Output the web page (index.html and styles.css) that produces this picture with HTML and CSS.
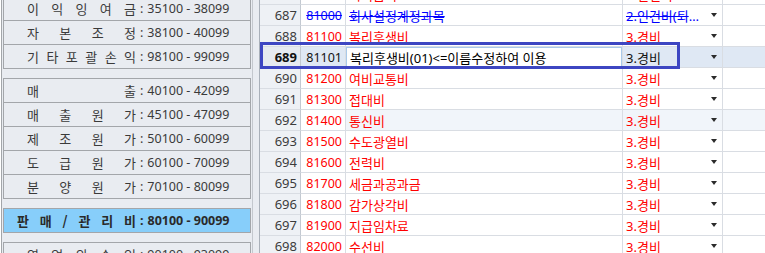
FILE: index.html
```html
<!DOCTYPE html>
<html lang="ko">
<head>
  <meta charset="UTF-8">
  <title>계정과목 범위</title>
  <link rel="stylesheet" href="styles.css">
</head>
<body>
  <div class="screen">
    <div class="range-panel">
      <div class="range-group first">
        <div class="range-btn"><span class="range-label"><span>이</span><span>익</span><span>잉</span><span>여</span><span>금</span></span><span class="range-colon">:</span><span class="range-num">35100 - 38099</span></div>
        <div class="range-btn"><span class="range-label"><span>자</span><span>본</span><span>조</span><span>정</span></span><span class="range-colon">:</span><span class="range-num">38100 - 40099</span></div>
        <div class="range-btn"><span class="range-label"><span>기</span><span>타</span><span>포</span><span>괄</span><span>손</span><span>익</span></span><span class="range-colon">:</span><span class="range-num">98100 - 99099</span></div>
      </div>
      <div class="range-group">
        <div class="range-btn"><span class="range-label"><span>매</span><span>출</span></span><span class="range-colon">:</span><span class="range-num">40100 - 42099</span></div>
        <div class="range-btn"><span class="range-label"><span>매</span><span>출</span><span>원</span><span>가</span></span><span class="range-colon">:</span><span class="range-num">45100 - 47099</span></div>
        <div class="range-btn"><span class="range-label"><span>제</span><span>조</span><span>원</span><span>가</span></span><span class="range-colon">:</span><span class="range-num">50100 - 60099</span></div>
        <div class="range-btn"><span class="range-label"><span>도</span><span>급</span><span>원</span><span>가</span></span><span class="range-colon">:</span><span class="range-num">60100 - 70099</span></div>
        <div class="range-btn"><span class="range-label"><span>분</span><span>양</span><span>원</span><span>가</span></span><span class="range-colon">:</span><span class="range-num">70100 - 80099</span></div>
      </div>
      <div class="range-group">
        <div class="range-btn active"><span class="range-label"><span>판</span><span>매</span><span>/</span><span>관</span><span>리</span><span>비</span></span><span class="range-colon">:</span><span class="range-num">80100 - 90099</span></div>
      </div>
      <div class="range-group">
        <div class="range-btn"><span class="range-label"><span>영</span><span>업</span><span>외</span><span>수</span><span>익</span></span><span class="range-colon">:</span><span class="range-num">90100 - 93099</span></div>
      </div>
    </div>

    <div class="splitter"></div>

    <div class="grid">
      <div class="grid-body">
        <div class="row">
          <div class="cell rownum">686</div>
          <div class="cell code">80900</div>
          <div class="cell name">퇴직급여</div>
          <div class="cell type"><span class="type-text">2.인건비</span><span class="drop"></span></div>
          <div class="cell extra"></div>
        </div>
        <div class="row deleted">
          <div class="cell rownum">687</div>
          <div class="cell code">81000</div>
          <div class="cell name">회사설정계정과목</div>
          <div class="cell type"><span class="type-text">2.인건비(퇴직급여)</span><span class="drop"></span></div>
          <div class="cell extra"></div>
        </div>
        <div class="row">
          <div class="cell rownum">688</div>
          <div class="cell code">81100</div>
          <div class="cell name">복리후생비</div>
          <div class="cell type"><span class="type-text">3.경비</span><span class="drop"></span></div>
          <div class="cell extra"></div>
        </div>
        <div class="row selected">
          <div class="cell rownum">689</div>
          <div class="cell code">81101</div>
          <div class="cell name"><div class="editor">복리후생비(01)&lt;=이름수정하여 이용</div></div>
          <div class="cell type"><span class="type-text">3.경비</span><span class="drop"></span></div>
          <div class="cell extra"></div>
        </div>
        <div class="row">
          <div class="cell rownum">690</div>
          <div class="cell code">81200</div>
          <div class="cell name">여비교통비</div>
          <div class="cell type"><span class="type-text">3.경비</span><span class="drop"></span></div>
          <div class="cell extra"></div>
        </div>
        <div class="row">
          <div class="cell rownum">691</div>
          <div class="cell code">81300</div>
          <div class="cell name">접대비</div>
          <div class="cell type"><span class="type-text">3.경비</span><span class="drop"></span></div>
          <div class="cell extra"></div>
        </div>
        <div class="row hover">
          <div class="cell rownum">692</div>
          <div class="cell code">81400</div>
          <div class="cell name">통신비</div>
          <div class="cell type"><span class="type-text">3.경비</span><span class="drop"></span></div>
          <div class="cell extra"></div>
        </div>
        <div class="row">
          <div class="cell rownum">693</div>
          <div class="cell code">81500</div>
          <div class="cell name">수도광열비</div>
          <div class="cell type"><span class="type-text">3.경비</span><span class="drop"></span></div>
          <div class="cell extra"></div>
        </div>
        <div class="row">
          <div class="cell rownum">694</div>
          <div class="cell code">81600</div>
          <div class="cell name">전력비</div>
          <div class="cell type"><span class="type-text">3.경비</span><span class="drop"></span></div>
          <div class="cell extra"></div>
        </div>
        <div class="row">
          <div class="cell rownum">695</div>
          <div class="cell code">81700</div>
          <div class="cell name">세금과공과금</div>
          <div class="cell type"><span class="type-text">3.경비</span><span class="drop"></span></div>
          <div class="cell extra"></div>
        </div>
        <div class="row">
          <div class="cell rownum">696</div>
          <div class="cell code">81800</div>
          <div class="cell name">감가상각비</div>
          <div class="cell type"><span class="type-text">3.경비</span><span class="drop"></span></div>
          <div class="cell extra"></div>
        </div>
        <div class="row">
          <div class="cell rownum">697</div>
          <div class="cell code">81900</div>
          <div class="cell name">지급임차료</div>
          <div class="cell type"><span class="type-text">3.경비</span><span class="drop"></span></div>
          <div class="cell extra"></div>
        </div>
        <div class="row">
          <div class="cell rownum">698</div>
          <div class="cell code">82000</div>
          <div class="cell name">수선비</div>
          <div class="cell type"><span class="type-text">3.경비</span><span class="drop"></span></div>
          <div class="cell extra"></div>
        </div>
      </div>
      <div class="focus-box"></div>
    </div>
  </div>
</body>
</html>
```

FILE: styles.css
```css
body {
  margin: 0;
  font-family: "Noto Sans", "Noto Sans CJK KR", sans-serif;
  font-size: 12.5px;
  background: #ffffff;
}
.screen {
  display: flex;
  height: 253px;
  overflow: hidden;
}

/* left: account range buttons */
.range-panel {
  width: 252px;
  box-sizing: border-box;
  margin-left: 1px;
  padding: 0 1px 0 1px;
  border-left: 1px solid #a3a6aa;
  border-right: 1px solid #c4c8ce;
  background: #e9ecf1;
  flex-shrink: 0;
}
.range-group {
  border: 1px solid #a3a6aa;
  border-bottom: none;
  margin-bottom: 9px;
}
.range-group.first {
  margin-top: -4px;
}
.range-btn {
  height: 23px;
  border-bottom: 1px solid #a3a6aa;
  display: flex;
  align-items: center;
  color: #3a3a3a;
  background: #e9ecf1;
}
.range-label {
  display: flex;
  justify-content: space-between;
  width: 109px;
  margin-left: 23px;
  font-family: "Noto Sans CJK KR", sans-serif;
  font-size: 13px;
}
.range-colon {
  margin: 0 4px 0 4px;
}
.range-btn.active {
  background: #87cefa;
  font-weight: bold;
  color: #2a2a2a;
}
.range-btn.active .range-label {
  width: 119px;
  margin-left: 13px;
  font-weight: bold;
}

.splitter {
  width: 6px;
  flex-shrink: 0;
  background: #e9ecf1;
  border-right: 1px solid #a9b0b9;
}

/* right: account grid */
.grid {
  position: relative;
  flex: 1;
  overflow: hidden;
  font-size: 13px;
}
.grid-body {
  margin-top: -16px;
}
.row {
  display: grid;
  grid-template-columns: 41px 45px 277px 100px 1fr;
  height: 21px;
}
.cell {
  box-sizing: border-box;
  border-right: 1px solid #d9dde3;
  border-bottom: 1px solid #d9dde3;
  display: flex;
  align-items: center;
  white-space: nowrap;
  overflow: hidden;
  color: #ff0000;
}
.cell.rownum {
  justify-content: flex-end;
  padding-right: 3px;
  background: #eef1f5;
  color: #3c3c3c;
  border-right-color: #c3c9d1;
}
.cell.code {
  justify-content: flex-end;
  padding-right: 3px;
  font-size: 12.5px;
}
.cell.name {
  padding-left: 3px;
}
.cell.type {
  padding-left: 3px;
}
.type-text {
  flex: 1;
  overflow: hidden;
  text-overflow: ellipsis;
}
.drop {
  width: 17px;
  flex-shrink: 0;
  display: flex;
  justify-content: center;
}
.drop::after {
  content: "";
  border-left: 3px solid transparent;
  border-right: 3px solid transparent;
  border-top: 4px solid #2b2b2b;
}
.cell.extra {
  border-right: none;
}

.row.deleted .code,
.row.deleted .name,
.row.deleted .type-text {
  color: #0000ff;
  text-decoration: line-through;
}

.row.hover .name,
.row.hover .type,
.row.hover .extra {
  background: #f1f5fa;
}

.row.selected .cell {
  background: #dfe8f4;
  color: #111111;
}
.row.selected .rownum {
  font-weight: bold;
  background: #e6eaf0;
}
.row.selected .cell.name {
  padding: 0;
  align-items: stretch;
}
.editor {
  flex: 1;
  display: flex;
  align-items: center;
  padding-left: 3px;
  background: #ffffff;
  border: 1px solid #a9c9ea;
  color: #000000;
}

.focus-box {
  position: absolute;
  left: 0;
  top: 42px;
  width: 420px;
  height: 27px;
  box-sizing: border-box;
  border: 3px solid #3d46c2;
  pointer-events: none;
}
```
